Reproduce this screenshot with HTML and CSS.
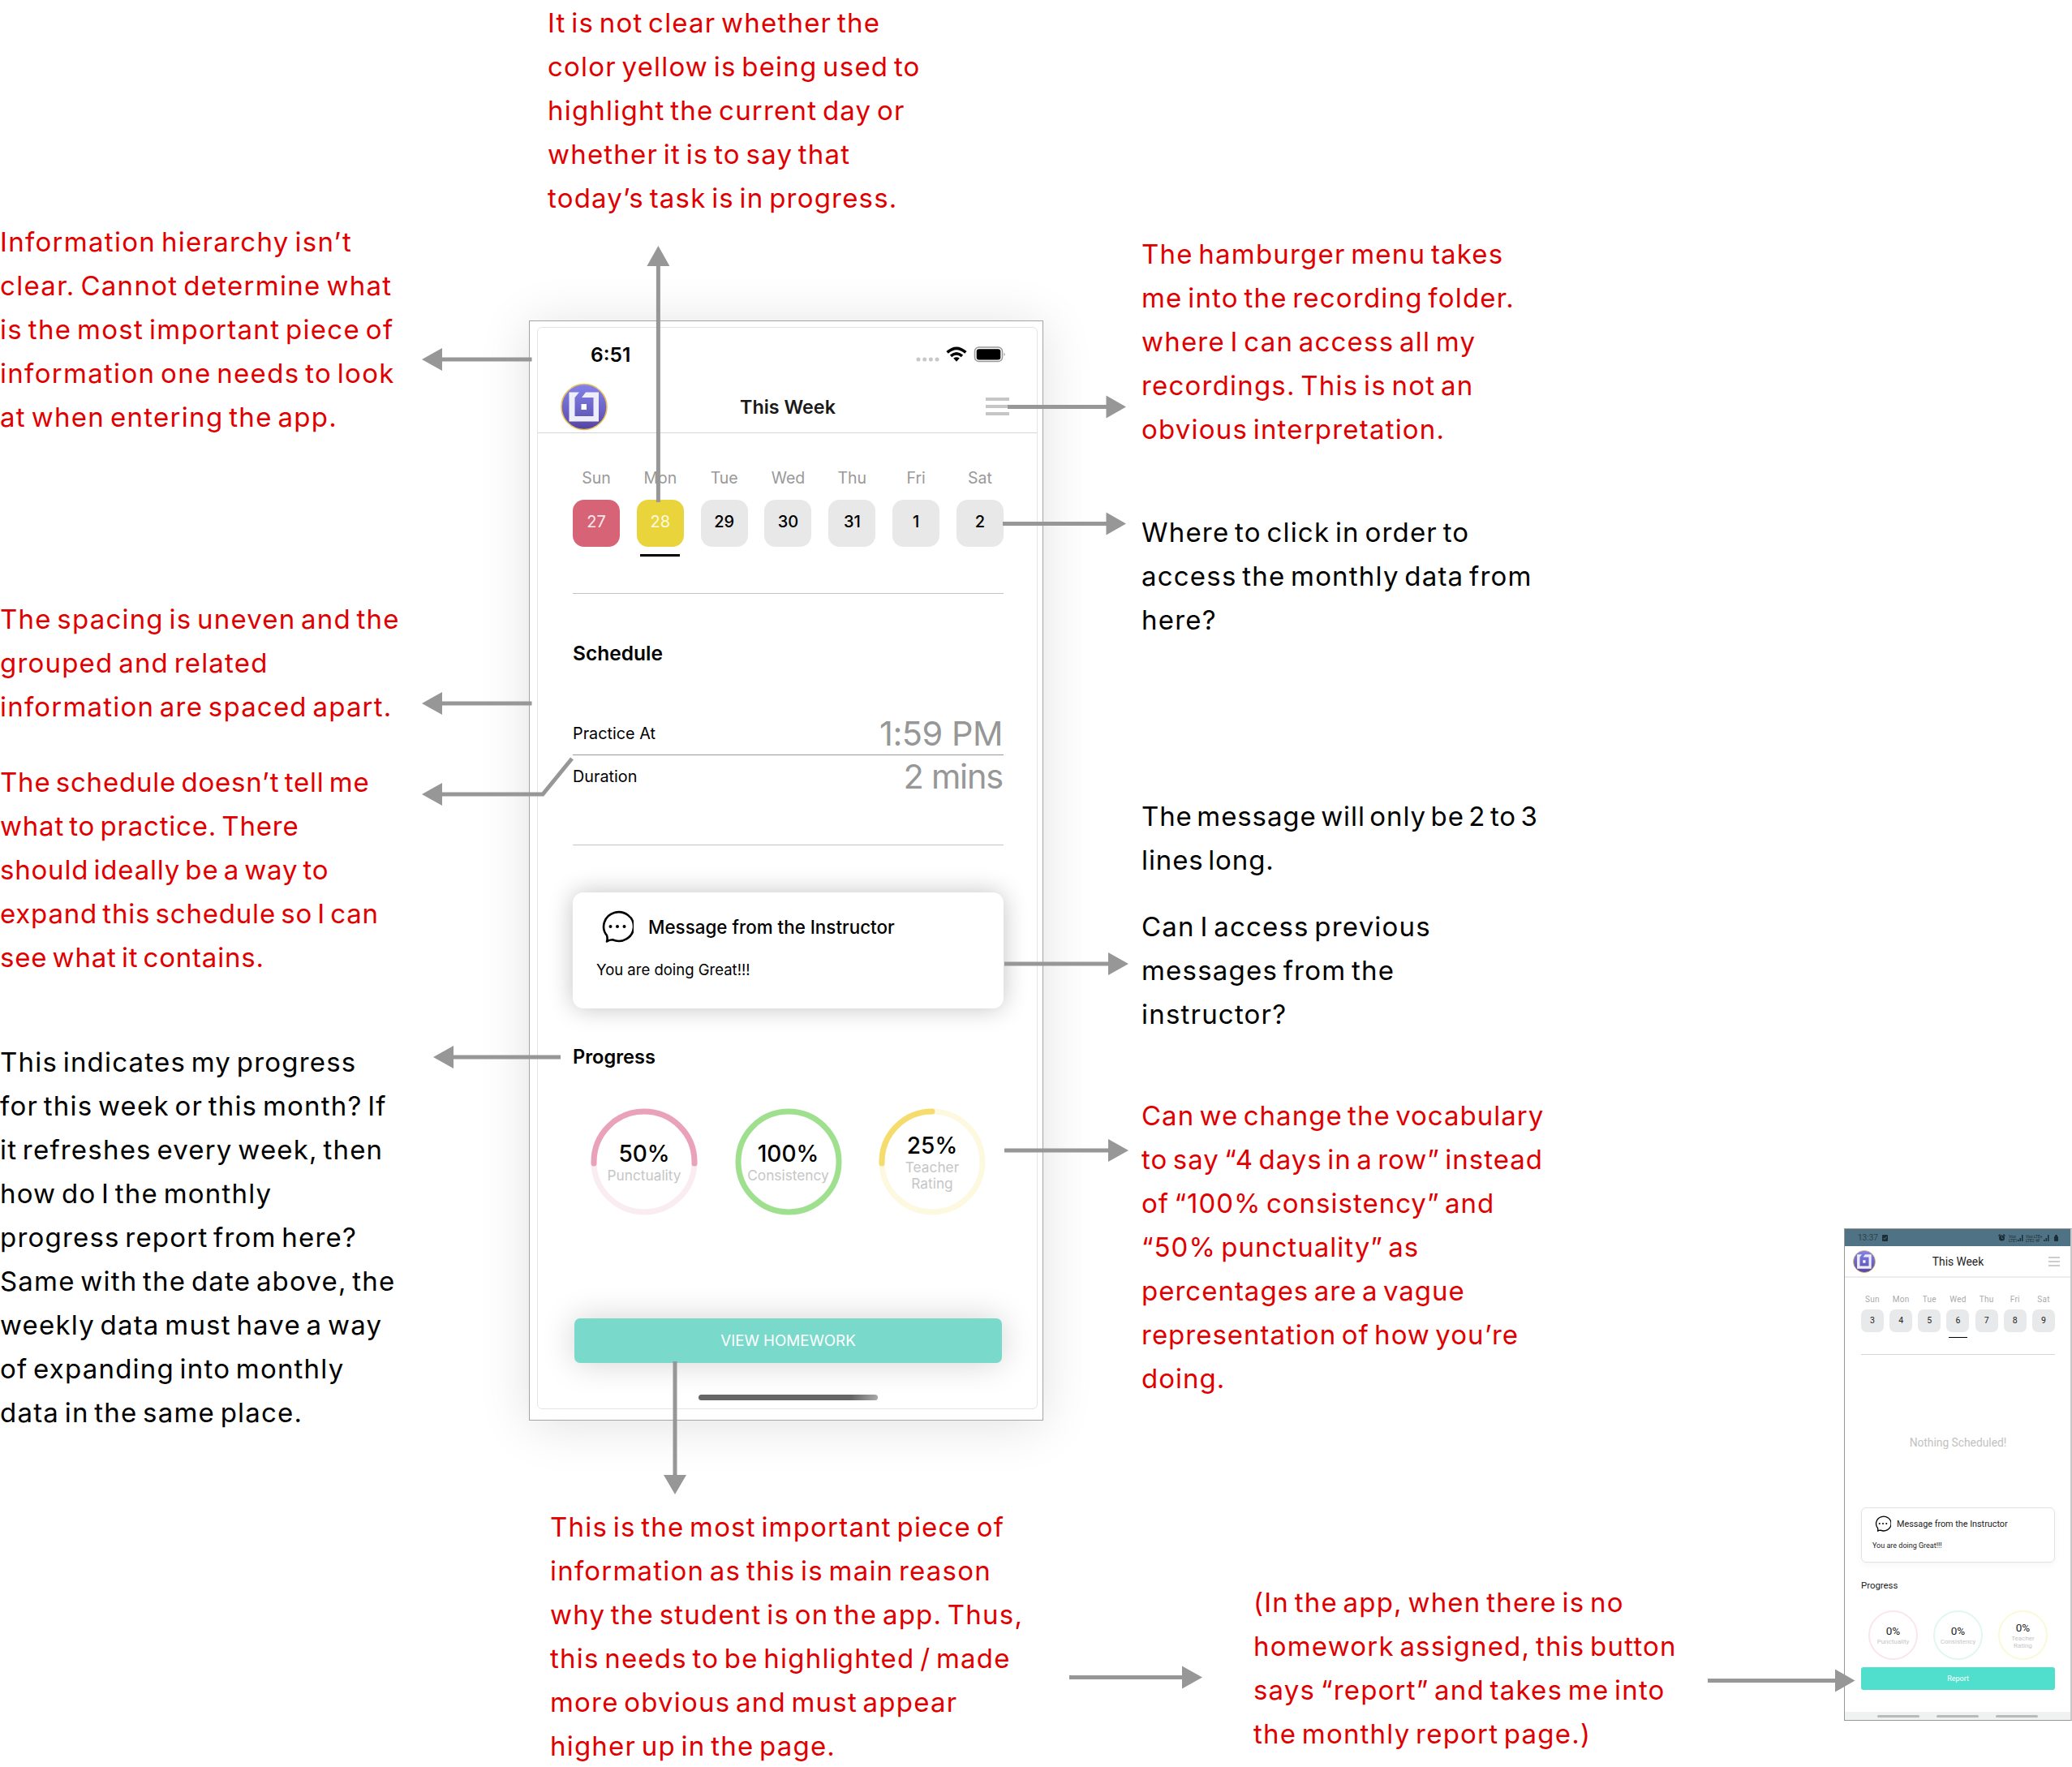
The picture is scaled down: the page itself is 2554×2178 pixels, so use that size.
FILE: index.html
```html
<!DOCTYPE html>
<html lang="en">
<head>
  <meta charset="UTF-8">
  <title>This Week - screen review</title>
  <link rel="stylesheet" href="styles.css">
</head>
<body>
  <!-- shared symbols -->
  <svg class="defs" width="0" height="0">
    <defs>
      <linearGradient id="logoFill" x1="0" y1="0" x2="0" y2="1">
        <stop offset="0" stop-color="#8482ea"/>
        <stop offset="0.6" stop-color="#6a61c4"/>
        <stop offset="1" stop-color="#5343a0"/>
      </linearGradient>
      <symbol id="logo" viewBox="0 0 58 58">
        <circle cx="29" cy="29" r="28" fill="url(#logoFill)" stroke="#e6bf55" stroke-width="1.6"/>
        <path d="M10.500 11H23L17.500 17.500V40.500H40.500V17.500H26L31 11H47V47H10.500Z" fill="#eeeefa"/>
        <rect x="25.500" y="25.500" width="6.500" height="7" fill="#fff"/>
      </symbol>
      <symbol id="chat" viewBox="0 0 40 40">
        <path d="M7 31A18.500 17.800 0 1 1 14 36.300Q10 36.500 7 38.500Q8.200 35 7 31Z" fill="none" stroke="#000" stroke-width="2.600" stroke-linejoin="round"/>
        <circle cx="11.500" cy="20" r="2"/><circle cx="20" cy="20" r="2"/><circle cx="28.500" cy="20" r="2"/>
      </symbol>
    </defs>
  </svg>

  <main class="board">
    <p class="note red n-color">It is not clear whether the<br>color yellow is being used to<br>highlight the current day or<br>whether it is to say that<br>today’s task is in progress.</p>
    <p class="note red n-hierarchy">Information hierarchy isn’t<br>clear. Cannot determine what<br>is the most important piece of<br>information one needs to look<br>at when entering the app.</p>
    <p class="note red n-spacing">The spacing is uneven and the<br>grouped and related<br>information are spaced apart.</p>
    <p class="note red n-schedule">The schedule doesn’t tell me<br>what to practice. There<br>should ideally be a way to<br>expand this schedule so I can<br>see what it contains.</p>
    <p class="note n-progress">This indicates my progress<br>for this week or this month? If<br>it refreshes every week, then<br>how do I the monthly<br>progress report from here?<br>Same with the date above, the<br>weekly data must have a way<br>of expanding into monthly<br>data in the same place.</p>
    <p class="note red n-menu">The hamburger menu takes<br>me into the recording folder.<br>where I can access all my<br>recordings. This is not an<br>obvious interpretation.</p>
    <p class="note n-monthly">Where to click in order to<br>access the monthly data from<br>here?</p>
    <p class="note n-length">The message will only be 2 to 3<br>lines long.</p>
    <p class="note n-previous">Can I access previous<br>messages from the<br>instructor?</p>
    <p class="note red n-vocab">Can we change the vocabulary<br>to say “4 days in a row” instead<br>of “100% consistency” and<br>“50% punctuality” as<br>percentages are a vague<br>representation of how you’re<br>doing.</p>
    <p class="note red n-homework">This is the most important piece of<br>information as this is main reason<br>why the student is on the app. Thus,<br>this needs to be highlighted / made<br>more obvious and must appear<br>higher up in the page.</p>
    <p class="note red n-report">(In the app, when there is no<br>homework assigned, this button<br>says “report” and takes me into<br>the monthly report page.)</p>

    <section class="phone">
      <div class="screen">
        <div class="status">
          <span class="time">6:51</span>
          <svg width="112" height="20" viewBox="0 0 112 20">
            <g fill="#c8c8c8"><circle cx="3" cy="16" r="2.500"/><circle cx="10.700" cy="16" r="2.500"/><circle cx="18.400" cy="16" r="2.500"/><circle cx="26" cy="16" r="2.500"/></g>
            <g fill="none" stroke="#000" stroke-width="3.600">
              <path d="M38.600 7.400Q50 -2.800 61.400 7.400"/>
              <path d="M43 11.800Q50 5.800 57 11.800"/>
            </g>
            <path d="M46.200 14.600Q50 11.800 53.800 14.600L50 18.800Z"/>
            <rect x="72.500" y="1" width="34" height="17.500" rx="5" fill="none" stroke="#999" stroke-width="1.500"/>
            <rect x="74.700" y="3.200" width="29.600" height="13.200" rx="3"/>
            <path d="M108.500 7.500Q111 9.800 108.500 12Z" fill="#999"/>
          </svg>
        </div>
        <header class="topbar">
          <svg class="logo"><use href="#logo"/></svg>
          <h1>This Week</h1>
          <span class="menu"><i></i><i></i><i></i></span>
        </header>
        <div class="content">
          <div class="week">
            <div class="day missed"><span>Sun</span><b>27</b></div>
            <div class="day today"><span>Mon</span><b>28</b></div>
            <div class="day"><span>Tue</span><b>29</b></div>
            <div class="day"><span>Wed</span><b>30</b></div>
            <div class="day"><span>Thu</span><b>31</b></div>
            <div class="day"><span>Fri</span><b>1</b></div>
            <div class="day"><span>Sat</span><b>2</b></div>
          </div>
          <div class="schedule">
            <h2>Schedule</h2>
            <div class="row"><span>Practice At</span><em>1:59 PM</em></div>
            <div class="row"><span>Duration</span><em class="mins">2 mins</em></div>
          </div>
          <div class="message">
            <div class="message-title"><svg class="chat"><use href="#chat"/></svg><h3>Message from the Instructor</h3></div>
            <p>You are doing Great!!!</p>
          </div>
          <h2 class="progress-title">Progress</h2>
          <div class="rings">
            <div class="ring">
              <svg viewBox="0 0 132 132" fill="none" stroke-width="7">
                <circle cx="66" cy="66" r="62" stroke="#f9edf1"/>
                <path d="M4 68V66A62 62 0 0 1 128 66V68" stroke="#eaa2ba" stroke-linecap="round"/>
              </svg>
              <b>50%</b><span>Punctuality</span>
            </div>
            <div class="ring">
              <svg viewBox="0 0 132 132" fill="none" stroke-width="7">
                <circle cx="66" cy="66" r="62" stroke="#9fe08f"/>
              </svg>
              <b>100%</b><span>Consistency</span>
            </div>
            <div class="ring">
              <svg viewBox="0 0 132 132" fill="none" stroke-width="7">
                <circle cx="66" cy="66" r="62" stroke="#fdf9e0"/>
                <path d="M4 68V66A62 62 0 0 1 66 4" stroke="#f5dc6c" stroke-linecap="round"/>
              </svg>
              <b>25%</b><span>Teacher<br>Rating</span>
            </div>
          </div>
          <div class="button">VIEW HOMEWORK</div>
          <div class="home-bar"></div>
        </div>
      </div>
    </section>

    <section class="mini">
      <div class="mini-status">
        <span>13:37</span>
        <svg class="check" width="7" height="8" viewBox="0 0 7 8"><rect width="7" height="8" rx="1" fill="#1d2d36"/><path d="M1.500 4L3 5.500L5.500 2.500" stroke="#4f7384" fill="none"/></svg>
        <svg class="mini-icons" width="75" height="10" viewBox="0 0 75 10" fill="#1d2d36">
          <circle cx="4.500" cy="5" r="3.500"/><path d="M0 2L2 0L3 1L1 3ZM9 2L7 0L6 1L8 3Z"/><path d="M4.500 3V5.500H6" stroke="#4f7384" fill="none" stroke-width="0.800"/>
          <text x="13" y="4.500">Voo</text><text x="13" y="9.500">LTE1</text>
          <path d="M24 9V7H25.500V9ZM26.500 9V5H28V9ZM29 9V1H30.500V9Z"/>
          <text x="34" y="4.500">Voo LTE+</text><text x="34" y="9.500">LTE2 4F</text>
          <path d="M56 9V7H57.500V9ZM58.500 9V5H60V9ZM61 9V1H62.500V9Z"/>
          <rect x="69" y="3" width="5" height="6" rx="1"/><rect x="70" y="1" width="3" height="3" rx="1"/>
        </svg>
      </div>
      <header class="mini-top">
        <svg class="mini-logo"><use href="#logo"/></svg>
        <h1>This Week</h1>
        <span class="mini-menu"><i></i><i></i><i></i></span>
      </header>
      <div class="mini-content">
        <div class="mini-week">
          <div class="mini-day"><span>Sun</span><b>3</b></div>
          <div class="mini-day"><span>Mon</span><b>4</b></div>
          <div class="mini-day"><span>Tue</span><b>5</b></div>
          <div class="mini-day current"><span>Wed</span><b>6</b></div>
          <div class="mini-day"><span>Thu</span><b>7</b></div>
          <div class="mini-day"><span>Fri</span><b>8</b></div>
          <div class="mini-day"><span>Sat</span><b>9</b></div>
        </div>
        <p class="nothing">Nothing Scheduled!</p>
        <div class="mini-message">
          <div class="mini-message-title"><svg><use href="#chat"/></svg><h3>Message from the Instructor</h3></div>
          <p>You are doing Great!!!</p>
        </div>
        <h2>Progress</h2>
        <div class="mini-rings">
          <div class="mini-ring pink"><b>0%</b><span>Punctuality</span></div>
          <div class="mini-ring green"><b>0%</b><span>Consistency</span></div>
          <div class="mini-ring yellow"><b>0%</b><span>Teacher<br>Rating</span></div>
        </div>
        <div class="mini-button">Report</div>
      </div>
      <div class="mini-nav"><i></i><i></i><i></i></div>
    </section>

    <!-- arrows between the notes and the screens -->
    <svg class="arrows" viewBox="0 0 2554 2178">
      <g fill="none" stroke="#979797" stroke-width="5">
        <path d="M655.500 443H544"/>
        <path d="M811.400 619V326"/>
        <path d="M1242 501.500H1365"/>
        <path d="M1236 645.500H1365"/>
        <path d="M655.500 867H544"/>
        <path d="M705 935L669 979H544"/>
        <path d="M691 1303H558"/>
        <path d="M1238 1188H1367"/>
        <path d="M1238 1418H1367"/>
        <path d="M832 1678V1820"/>
        <path d="M1318 2067.500H1459"/>
        <path d="M2105 2071.500H2264"/>
      </g>
      <g fill="#979797">
        <path d="M520 443L545 429V457Z"/>
        <path d="M811.400 303L797.400 328H825.400Z"/>
        <path d="M1388 501.500L1363.500 487.500V515.500Z"/>
        <path d="M1388 645.500L1363.500 631.500V659.500Z"/>
        <path d="M520 867L545 853V881Z"/>
        <path d="M520 979L545 965V993Z"/>
        <path d="M534 1303L559 1289V1317Z"/>
        <path d="M1391 1188L1366 1174V1202Z"/>
        <path d="M1391 1418L1366 1404V1432Z"/>
        <path d="M832 1842L818 1818H846Z"/>
        <path d="M1482 2067.500L1457 2053.500V2081.500Z"/>
        <path d="M2286.500 2071.500L2262 2057.500V2085.500Z"/>
      </g>
    </svg>
  </main>
</body>
</html>
```
FILE: styles.css
```css
* {
  margin: 0;
  padding: 0;
  box-sizing: border-box;
}

body {
  font-family: 'Inter', sans-serif;
  background: #fff;
  color: #000;
}

i, em {
  font-style: normal;
}

.defs {
  position: absolute;
}

.board {
  position: relative;
  width: 2554px;
  height: 2178px;
  overflow: hidden;
}

.note {
  position: absolute;
  font-size: 33px;
  line-height: 54px;
  letter-spacing: 1.2px;
  word-spacing: -3.8px;
  white-space: nowrap;
}

.red {
  color: #e00000;
}

.n-color { left: 675px; top: 1px; }
.n-hierarchy { left: 0; top: 271px; letter-spacing: 1.3px; }
.n-spacing { left: 0; top: 736px; }
.n-schedule { left: 0; top: 937px; letter-spacing: 0.8px; }
.n-progress { left: 0; top: 1282px; }
.n-menu { left: 1407px; top: 286px; }
.n-monthly { left: 1407px; top: 629px; }
.n-length { left: 1407px; top: 979px; letter-spacing: 0.9px; word-spacing: -4.6px; }
.n-previous { left: 1407px; top: 1115px; }
.n-vocab { left: 1407px; top: 1348px; letter-spacing: 1px; }
.n-homework { left: 678px; top: 1855px; }
.n-report { left: 1545px; top: 1948px; }

.arrows {
  position: absolute;
  left: 0;
  top: 0;
  width: 2554px;
  height: 2178px;
}

/* main phone */
.phone {
  position: absolute;
  left: 652px;
  top: 395px;
  width: 634px;
  height: 1356px;
  padding: 7px 6px 13px 9px;
  background: #fff;
  border: 1px solid #a5a5a5;
  box-shadow: 0 5px 60px rgba(0, 0, 0, 0.12);
}

.screen {
  height: 100%;
  border: 1px solid #e4e4e4;
  border-radius: 6px;
}

.status {
  display: flex;
  justify-content: space-between;
  align-items: center;
  height: 66px;
  padding: 0 37px 0 65px;
}

.time {
  font-size: 24.5px;
  font-weight: 600;
}

.topbar {
  display: flex;
  justify-content: space-between;
  align-items: center;
  height: 64px;
  padding: 0 34px 1px 28px;
  border-bottom: 1px solid #d6d6d6;
}

.logo {
  width: 58px;
  height: 59px;
}

.topbar h1 {
  font-size: 23.3px;
  font-weight: 600;
  color: #1a1a1a;
  margin-right: 22px;
}

.menu {
  display: flex;
  flex-direction: column;
  gap: 5px;
  width: 29px;
}

.menu i {
  height: 4px;
  background: #c6c6c6;
}

.content {
  padding: 45px 41px 0 43px;
}

.week {
  display: flex;
  justify-content: space-between;
  height: 153px;
  border-bottom: 1px solid #c4c4c4;
}

.day {
  width: 58px;
  text-align: center;
}

.day span {
  display: block;
  font-size: 19.5px;
  line-height: 20px;
  color: #999;
}

.day b {
  display: block;
  height: 58px;
  margin-top: 17px;
  border-radius: 14px;
  background: #e8e8e8;
  font-size: 20px;
  font-weight: 500;
  line-height: 54px;
}

.missed b {
  background: #d66376;
  color: #fbe9ec;
  font-weight: 400;
}

.today b {
  background: #ead43b;
  color: #fffbe0;
  font-weight: 400;
}

.today::after {
  content: "";
  display: block;
  width: 49px;
  height: 3px;
  margin: 9px auto 0;
  background: #000;
}

.schedule {
  height: 310px;
  padding-top: 58px;
  border-bottom: 1px solid #c4c4c4;
}

h2 {
  font-size: 24.5px;
  font-weight: 600;
  line-height: 30px;
}

.row {
  display: flex;
  justify-content: space-between;
  align-items: center;
  height: 52px;
}

.schedule h2 + .row {
  height: 53px;
  margin-top: 58px;
  border-bottom: 1px solid #999;
}

.row span {
  font-size: 19.8px;
}

.row em {
  margin-right: 1px;
  font-size: 41.5px;
  font-weight: 400;
  letter-spacing: -0.5px;
  color: #979797;
}

.row .mins {
  letter-spacing: -1.2px;
}

.message {
  height: 143px;
  margin-top: 58px;
  padding: 22px 29px;
  border-radius: 13px;
  box-shadow: 0 0 30px rgba(0, 0, 0, 0.24);
}

.message-title {
  display: flex;
  align-items: center;
  gap: 18px;
  height: 40px;
  padding-left: 6px;
}

.chat {
  width: 40px;
  height: 40px;
}

h3 {
  font-size: 22.4px;
  font-weight: 500;
}

.message p {
  margin-top: 21px;
  font-size: 18.5px;
  line-height: 24px;
}

.progress-title {
  margin-top: 45px;
  font-size: 23.6px;
}

.rings {
  display: flex;
  justify-content: space-between;
  margin-top: 48px;
  padding: 0 22px;
}

.ring {
  position: relative;
  display: flex;
  flex-direction: column;
  align-items: center;
  justify-content: center;
  width: 132px;
  height: 132px;
  text-align: center;
}

.ring svg {
  position: absolute;
  inset: 0;
}

.ring b {
  font-size: 28px;
  font-weight: 500;
  line-height: 34px;
}

.ring span {
  font-size: 17.3px;
  line-height: 20.5px;
  color: #c6c6c6;
}

.button {
  height: 55px;
  margin: 127px 2px 0 2px;
  border-radius: 7px;
  background: #79d9cb;
  box-shadow: 0 0 40px rgba(0, 0, 0, 0.18);
  color: #fff;
  font-size: 18.7px;
  line-height: 56px;
  text-align: center;
}

.home-bar {
  width: 221px;
  height: 7px;
  margin: 39px auto 0;
  border-radius: 4px;
  background: linear-gradient(100deg, #666 85%, #aaa);
}

/* small phone */
.mini {
  position: absolute;
  left: 2273px;
  top: 1514px;
  width: 281px;
  height: 607px;
  display: flex;
  flex-direction: column;
  border: 1px solid #979797;
  border-right: 2px solid #c8c8c8;
  font-family: 'Roboto', sans-serif;
  color: #222;
}

.mini-status {
  display: flex;
  align-items: center;
  height: 21px;
  padding: 0 14px 0 16px;
  background: #4f7384;
  color: #2b3f4a;
  font-size: 10px;
}

.check {
  margin-left: 5px;
}

.mini-icons {
  margin-left: auto;
}

.mini-icons text {
  font-size: 5px;
}

.mini-top {
  display: flex;
  justify-content: space-between;
  align-items: center;
  height: 39px;
  padding: 0 13px 0 10px;
  border-bottom: 2px solid #ececec;
}

.mini-logo {
  width: 28px;
  height: 28px;
}

.mini-top h1 {
  font-size: 13.8px;
  font-weight: 400;
  margin-right: 10px;
}

.mini-menu {
  display: flex;
  flex-direction: column;
  gap: 3px;
  width: 14px;
}

.mini-menu i {
  height: 2px;
  background: #ccc;
}

.mini-content {
  flex: 1;
  padding: 21px 19px 0 20px;
}

.mini-week {
  display: flex;
  justify-content: space-between;
  height: 74px;
  border-bottom: 1px solid #d6d6d6;
}

.mini-day {
  width: 28px;
  text-align: center;
}

.mini-day span {
  display: block;
  font-size: 10px;
  line-height: 12px;
  letter-spacing: 0.3px;
  color: #aaa;
}

.mini-day b {
  display: block;
  height: 28px;
  margin-top: 6px;
  border-radius: 7px;
  background: #e7e9ea;
  font-size: 10.5px;
  font-weight: 400;
  line-height: 28px;
}

.current::after {
  content: "";
  display: block;
  width: 23px;
  height: 1px;
  margin: 6px auto 0;
  background: #000;
}

.nothing {
  margin-top: 98px;
  color: #c2c2c2;
  font-size: 13.8px;
  line-height: 20px;
  text-align: center;
}

.mini-message {
  height: 68px;
  margin-top: 70px;
  padding: 9px 13px;
  border: 1px solid #e2e2e2;
  border-radius: 6px;
  box-shadow: 0 3px 8px rgba(0, 0, 0, 0.04);
}

.mini-message-title {
  display: flex;
  align-items: center;
  gap: 7px;
  height: 20px;
  padding-left: 3px;
}

.mini-message svg {
  width: 20px;
  height: 20px;
}

.mini-message h3 {
  font-size: 10.8px;
  font-weight: 400;
}

.mini-message p {
  margin-top: 10px;
  font-size: 9px;
  line-height: 14px;
}

.mini h2 {
  margin-top: 20px;
  font-size: 11.4px;
  font-weight: 400;
  line-height: 16px;
}

.mini-rings {
  display: flex;
  justify-content: space-between;
  margin-top: 23px;
  padding: 0 9px;
}

.mini-ring {
  display: flex;
  flex-direction: column;
  align-items: center;
  justify-content: center;
  width: 61px;
  height: 61px;
  border: 2px solid #fbe6e9;
  border-radius: 50%;
  text-align: center;
}

.mini-ring b {
  font-size: 13.5px;
  font-weight: 400;
  line-height: 17px;
}

.mini-ring span {
  font-size: 8px;
  line-height: 9.5px;
  color: #c6c6c6;
}

.mini-ring.green {
  border-color: #e0f8ec;
}

.mini-ring.yellow {
  border-color: #fafad6;
}

.mini-button {
  height: 28px;
  margin-top: 9px;
  border-radius: 3px;
  background: #50dfcc;
  color: #fff;
  font-size: 9px;
  line-height: 28px;
  text-align: center;
}

.mini-nav {
  display: flex;
  justify-content: center;
  align-items: center;
  gap: 21px;
  height: 10px;
  background: #f0f1f1;
}

.mini-nav i {
  width: 52px;
  height: 3px;
  border-radius: 2px;
  background: #b9bbbb;
}
```
